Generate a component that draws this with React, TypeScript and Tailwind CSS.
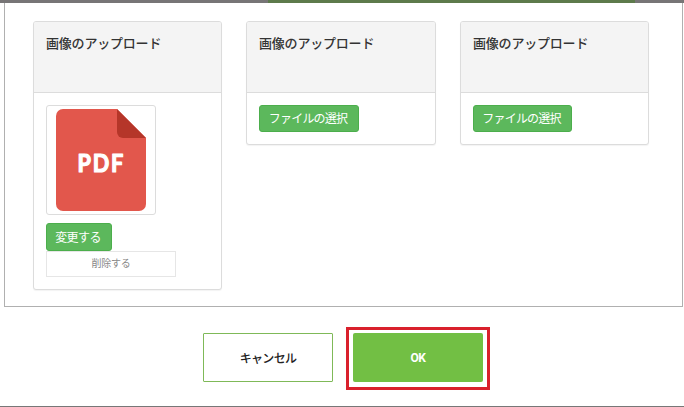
import { ReactNode } from "react";

function PdfIcon() {
  return (
    <svg width="90" height="102" viewBox="0 0 90 102">
      <path
        d="M7 0H61L90 29V95a7 7 0 0 1-7 7H7a7 7 0 0 1-7-7V7a7 7 0 0 1 7-7z"
        fill="#e2574c"
      />
      <path d="M61 0L90 29H67a6 6 0 0 1-6-6z" fill="#b53629" />
      <text
        x="21.5"
        y="63"
        textLength="47.5"
        lengthAdjust="spacingAndGlyphs"
        fill="#fff"
        stroke="#fff"
        strokeWidth="1.2"
        strokeLinejoin="round"
        className="font-['Lato',sans-serif] text-[24.5px] font-bold tracking-[2px]"
      >
        PDF
      </text>
    </svg>
  );
}

function UploadCard({ width, children }: { width: string; children: ReactNode }) {
  return (
    <div
      className={`${width} rounded-[3px] border border-[#dcdcdc] bg-white shadow-[0_1px_1px_rgba(0,0,0,0.05)]`}
    >
      <div className="h-[71px] rounded-t-[2px] border-b border-[#dcdcdc] bg-[#f4f4f4] px-3 pt-3">
        <h3 className="whitespace-nowrap text-[13px] font-medium leading-[18px] tracking-[-0.2px] text-[#333]">
          画像のアップロード
        </h3>
      </div>
      <div className="px-3 py-3">{children}</div>
    </div>
  );
}

function SelectButton({ width }: { width: string }) {
  return (
    <button
      className={`${width} block h-[27px] whitespace-nowrap rounded-[3px] border border-[#4cae4c] bg-[#5cb85c] pb-0.5 pr-0.5 text-[12px] leading-[23px] tracking-[-0.8px] text-white`}
    >
      ファイルの選択
    </button>
  );
}

export default function App() {
  return (
    <div className="h-[407px] w-[684px] overflow-hidden border-b border-[#777] bg-white font-['Noto_Sans_CJK_JP',sans-serif]">
      <div className="h-[3px] bg-[#777576] pl-[268px]">
        <div className="h-full w-[367px] bg-[#5d7a4b]" />
      </div>

      <div className="ml-1 flex h-[304px] w-[679px] items-start border-x border-b border-[#b0b0b0] pl-7 pt-[18px]">
        <UploadCard width="w-[189px] h-[269px]">
          <div className="flex h-[110px] w-[110px] justify-center rounded-[3px] border border-[#dcdcdc] pt-[3px]">
            <PdfIcon />
          </div>
          <button className="mt-2 block h-7 w-[66px] whitespace-nowrap rounded-[3px] border border-[#4cae4c] bg-[#5cb85c] pr-0.5 text-[12px] leading-[26px] tracking-[-0.6px] text-white">
            変更する
          </button>
          <button className="block h-[26px] w-[130px] border border-[#e6e6e6] pb-0.5 text-[10px] leading-[22px] tracking-[-0.3px] text-[#888]">
            削除する
          </button>
        </UploadCard>
        <UploadCard width="w-[190px] h-[124px] ml-6">
          <SelectButton width="w-[100px]" />
        </UploadCard>
        <UploadCard width="w-[189px] h-[124px] ml-6">
          <SelectButton width="w-[99px]" />
        </UploadCard>
      </div>

      <div className="flex items-start pl-[203px] pt-5">
        <button className="mt-1.5 h-[49px] w-[130px] rounded-[1px] border border-[#7fb958] text-[12px] font-medium tracking-[-0.7px] text-[#222]">
          キャンセル
        </button>
        <div className="ml-[13px] flex h-[63px] w-36 items-start border-[3px] border-[#d9202c] pl-1 pt-[3px]">
          <button className="h-[49px] w-[130px] rounded-[2px] bg-[#72bf44] font-['Roboto',sans-serif] text-[12px] font-bold tracking-[-0.5px] text-white">
            OK
          </button>
        </div>
      </div>
    </div>
  );
}
